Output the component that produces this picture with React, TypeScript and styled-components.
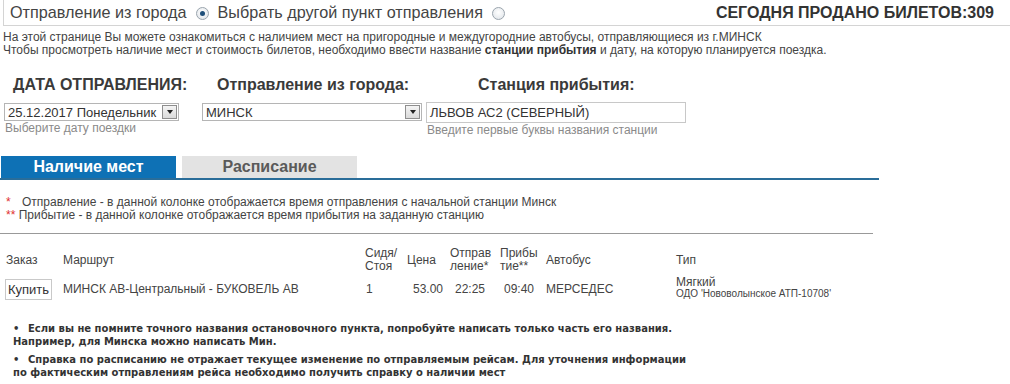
import React from "react";
import styled, { createGlobalStyle } from "styled-components";

const Global = createGlobalStyle`
  html, body { margin: 0; padding: 0; background: #fff; }
  body { font-family: "Liberation Sans", Arial, sans-serif; color: #333; }
`;

const Page = styled.div`
  width: 1010px;
  height: 384px;
  overflow: hidden;
  display: flex;
  flex-direction: column;
`;

const TopBar = styled.div`
  margin-left: 3px;
  margin-top: -1px;
  height: 30px;
  border: 1px solid #d4d4d4;
  border-right: none;
  border-top-color: #e4e4e4;
  display: flex;
  align-items: center;
  padding: 0 16px 0 6px;
  box-sizing: border-box;
`;

const TopLabel = styled.span`
  font-size: 16.2px;
  color: #444;
  display: flex;
  align-items: center;
  gap: 9px;
  margin-right: 9px;
  white-space: nowrap;
`;

const Radio = styled.span<{ $checked?: boolean }>`
  width: 11px;
  height: 11px;
  border-radius: 50%;
  border: 1px solid #9aa4ad;
  background: radial-gradient(circle at 50% 40%, #fff, #dde2e7);
  display: inline-flex;
  align-items: center;
  justify-content: center;
  margin-top: 2px;
  &::after {
    content: "";
    width: 5px;
    height: 5px;
    border-radius: 50%;
    background: ${(p) => (p.$checked ? "#1f4f7a" : "transparent")};
  }
`;

const Sold = styled.span`
  margin-left: auto;
  font-size: 16px;
  font-weight: bold;
  color: #333;
`;

const Intro = styled.div`
  font-size: 12px;
  line-height: 13px;
  color: #444;
  padding: 5px 0 0 3px;
  b { color: #333; }
`;

const FormRow = styled.div`
  display: flex;
  margin-top: 17px;
  padding-left: 4px;
`;

const Field = styled.div<{ $w: number; $gap: number }>`
  width: ${(p) => p.$w}px;
  margin-right: ${(p) => p.$gap}px;
  display: flex;
  flex-direction: column;
`;

const FieldLabel = styled.div<{ $indent: number }>`
  font-size: 16px;
  font-weight: bold;
  color: #3a3a3a;
  padding-left: ${(p) => p.$indent}px;
  height: 22px;
  line-height: 22px;
  white-space: nowrap;
`;

const SelectBox = styled.div`
  height: 18px;
  border: 1px solid #b5b5b5;
  display: flex;
  align-items: center;
  font-size: 13px;
  color: #333;
  box-sizing: border-box;
  margin-top: 7px;
  padding-left: 3px;
  background: #fff;
`;

const SelectText = styled.span`
  flex: 1;
  white-space: nowrap;
  overflow: hidden;
`;

const Arrow = styled.span`
  width: 15px;
  height: 14px;
  border: 1px solid #8e8e8e;
  background: linear-gradient(#f4f4f4, #dadada);
  display: inline-flex;
  align-items: center;
  justify-content: center;
  margin-right: 1px;
  box-sizing: border-box;
  &::after {
    content: "";
    border-left: 3px solid transparent;
    border-right: 3px solid transparent;
    border-top: 4px solid #222;
  }
`;

const InputBox = styled.div`
  height: 21px;
  border: 1px solid #c8c8c8;
  font-size: 13px;
  color: #333;
  display: flex;
  align-items: center;
  padding-left: 3px;
  box-sizing: border-box;
  margin-top: 6px;
`;

const Hint = styled.div`
  font-size: 12px;
  color: #8a8a8a;
  padding-left: 1px;
`;

const Tabs = styled.div`
  display: flex;
  margin-top: 19px;
  width: 878px;
  border-bottom: 2px solid #2a6d99;
  gap: 6px;
  padding-left: 1px;
`;

const Tab = styled.div<{ $active?: boolean }>`
  width: 175px;
  height: 22px;
  line-height: 22px;
  text-align: center;
  font-size: 16px;
  font-weight: bold;
  background: ${(p) => (p.$active ? "#0e71b5" : "#e3e3e3")};
  color: ${(p) => (p.$active ? "#fff" : "#5a5a5a")};
`;

const Legend = styled.div`
  margin-top: 16px;
  font-size: 12px;
  line-height: 13px;
  color: #444;
  padding-left: 6px;
  padding-bottom: 11px;
  width: 867px;
  border-bottom: 1px solid #999;
`;

const Star = styled.span<{ $w?: number }>`
  color: #e03030;
  display: inline-block;
  width: ${(p) => (p.$w ? `${p.$w}px` : "auto")};
`;

const Table = styled.div`
  display: grid;
  grid-template-columns: 57px 302px 42px 43px 50px 46px 130px 1fr;
  padding-left: 6px;
  font-size: 12px;
  color: #444;
  margin-top: 11px;
  align-items: center;
`;

const HeadCell = styled.div`
  line-height: 13px;
  height: 30px;
  display: flex;
  align-items: center;
  color: #444;
`;

const Cell = styled.div<{ $pad?: number }>`
  height: 28px;
  display: flex;
  align-items: center;
  padding-left: ${(p) => p.$pad ?? 0}px;
  font-size: 12px;
  color: #444;
  white-space: nowrap;
`;

const BuyButton = styled.span`
  border: 1px solid #c9c9c9;
  padding: 0 2px;
  height: 19px;
  line-height: 19px;
  font-size: 13px;
  color: #333;
  margin-left: -1px;
`;

const TypeCell = styled.div`
  display: flex;
  flex-direction: column;
  font-size: 12px;
  color: #444;
  line-height: 12px;
  margin-top: -3px;
  white-space: nowrap;
  small { font-size: 10px; line-height: 12px; }
`;

const Notes = styled.ul`
  margin: 19px 0 0 13px;
  padding: 0;
  list-style: none;
  font-family: "DejaVu Sans", Verdana, sans-serif;
  font-weight: bold;
  font-size: 10px;
  color: #333;
  line-height: 13px;
`;

const Note = styled.li`
  margin-bottom: 5px;
  &::before {
    content: "•";
    display: inline-block;
    width: 15px;
  }
`;

export default function App() {
  return (
    <Page>
      <Global />
      <TopBar>
        <TopLabel>
          Отправление из города <Radio $checked />
        </TopLabel>
        <TopLabel>
          Выбрать другой пункт отправления <Radio />
        </TopLabel>
        <Sold>СЕГОДНЯ ПРОДАНО БИЛЕТОВ:309</Sold>
      </TopBar>
      <Intro>
        На этой странице Вы можете ознакомиться с наличием мест на пригородные и междугородние автобусы, отправляющиеся из г.МИНСК
        <br />
        Чтобы просмотреть наличие мест и стоимость билетов, необходимо ввести название <b>станции прибытия</b> и дату, на которую планируется поездка.
      </Intro>
      <FormRow>
        <Field $w={175} $gap={23}>
          <FieldLabel $indent={9}>ДАТА ОТПРАВЛЕНИЯ:</FieldLabel>
          <SelectBox>
            <SelectText>25.12.2017 Понедельник</SelectText>
            <Arrow />
          </SelectBox>
          <Hint>Выберите дату поездки</Hint>
        </Field>
        <Field $w={220} $gap={4}>
          <FieldLabel $indent={15}>Отправление из города:</FieldLabel>
          <SelectBox>
            <SelectText>МИНСК</SelectText>
            <Arrow />
          </SelectBox>
        </Field>
        <Field $w={260} $gap={0}>
          <FieldLabel $indent={52}>Станция прибытия:</FieldLabel>
          <InputBox>ЛЬВОВ АС2 (СЕВЕРНЫЙ)</InputBox>
          <Hint>Введите первые буквы названия станции</Hint>
        </Field>
      </FormRow>
      <Tabs>
        <Tab $active>Наличие мест</Tab>
        <Tab>Расписание</Tab>
      </Tabs>
      <Legend>
        <Star $w={16}>*</Star>Отправление - в данной колонке отображается время отправления с начальной станции Минск
        <br />
        <Star>**</Star> Прибытие - в данной колонке отображается время прибытия на заданную станцию
      </Legend>
      <Table>
        <HeadCell>Заказ</HeadCell>
        <HeadCell>Маршрут</HeadCell>
        <HeadCell>Сидя/<br />Стоя</HeadCell>
        <HeadCell>Цена</HeadCell>
        <HeadCell>Отправ<br />ление*</HeadCell>
        <HeadCell>Прибы<br />тие**</HeadCell>
        <HeadCell>Автобус</HeadCell>
        <HeadCell>Тип</HeadCell>
        <Cell><BuyButton>Купить</BuyButton></Cell>
        <Cell>МИНСК АВ-Центральный - БУКОВЕЛЬ АВ</Cell>
        <Cell $pad={1}>1</Cell>
        <Cell $pad={6}>53.00</Cell>
        <Cell $pad={5}>22:25</Cell>
        <Cell $pad={4}>09:40</Cell>
        <Cell>МЕРСЕДЕС</Cell>
        <TypeCell>
          <span>Мягкий</span>
          <small>ОДО 'Нововолынское АТП-10708'</small>
        </TypeCell>
      </Table>
      <Notes>
        <Note>
          Если вы не помните точного названия остановочного пункта, попробуйте написать только часть его названия.
          <br />
          Например, для Минска можно написать Мин.
        </Note>
        <Note>
          Справка по расписанию не отражает текущее изменение по отправляемым рейсам. Для уточнения информации
          <br />
          по фактическим отправлениям рейса необходимо получить справку о наличии мест
        </Note>
      </Notes>
    </Page>
  );
}
